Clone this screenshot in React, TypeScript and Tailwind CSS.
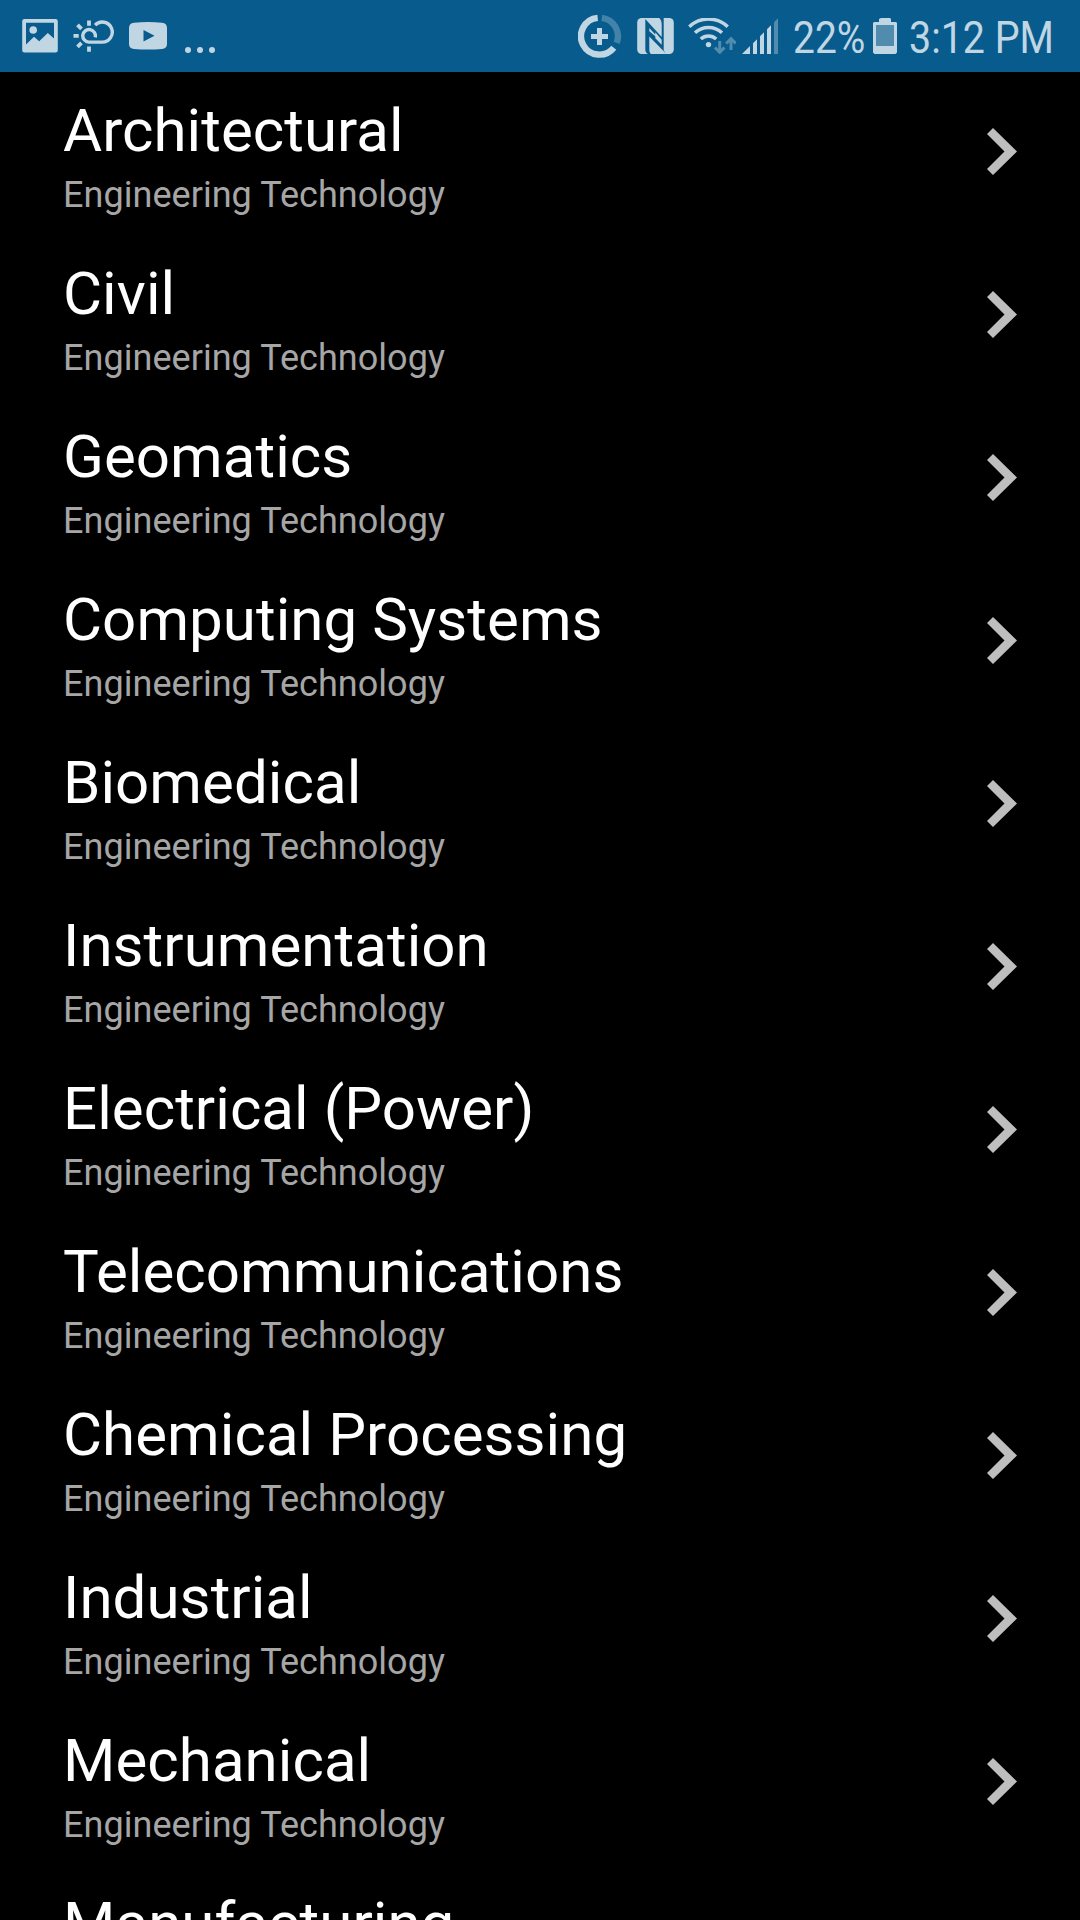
import React from "react";

const programs = [
  "Architectural",
  "Civil",
  "Geomatics",
  "Computing Systems",
  "Biomedical",
  "Instrumentation",
  "Electrical (Power)",
  "Telecommunications",
  "Chemical Processing",
  "Industrial",
  "Mechanical",
  "Manufacturing",
];

const BAR = "#085b8d";

function PictureIcon() {
  return (
    <svg className="h-[34px] w-9 shrink-0" viewBox="22 19 36 34" fill="currentColor">
      <path fillRule="evenodd" d="M24.5 19h31a2.3 2.3 0 0 1 2.3 2.3v29a2.3 2.3 0 0 1-2.3 2.3h-31a2.3 2.3 0 0 1-2.3-2.3v-29a2.3 2.3 0 0 1 2.3-2.3zM26 22.7v21.8l8-7.7 5.2 4.5 8.6-8.4 6.2 5.7V22.7z" />
      <circle cx="33.2" cy="30" r="3.8" />
    </svg>
  );
}

function WeatherIcon() {
  return (
    <svg className="h-8 w-[43px] shrink-0" viewBox="73 20.5 43 32" fill="none" stroke="currentColor" strokeWidth="3.4">
      <path d="M95.2 37.8a6.3 6.3 0 1 0-6.3 4.8h13.4a10 10 0 1 0-7.2-17" />
      <path d="M89 21v5.2M89 47v5.2M73.5 36.3h5.2M77.5 25.3l4 4M77.5 47.3l4-4" strokeWidth="3.8" />
    </svg>
  );
}

function VideoIcon() {
  return (
    <svg className="h-7 w-[38px] shrink-0" viewBox="129 22 38 28" fill="currentColor">
      <path fillRule="evenodd" d="M134 22.7q14-1.2 28 0q5 .4 5 5.3v16q0 4.7-5 5q-14 1-28 0q-5-.3-5-5V28q0-4.9 5-5.3zM143.500 30v11.500l11-5.800z" />
    </svg>
  );
}

function DataIcon() {
  return (
    <svg className="h-11 w-11 shrink-0" viewBox="578 14 44 44" fill="none" stroke="currentColor" strokeWidth="6.4">
      <path d="M597.7 17.9a18.4 18.4 0 1 0 16.1 29.800" />
      <path d="M601.8 17.9a18.4 18.4 0 0 1 14.900 24.900" opacity=".33" />
      <path d="M599.500 28v17M591 36.500h17" strokeWidth="5" />
    </svg>
  );
}

function NfcIcon() {
  return (
    <svg className="h-9 w-[37px] shrink-0" viewBox="637 18 37 36">
      <rect x="637.2" y="18" width="36.6" height="36" rx="4.5" fill="currentColor" />
      <path
        d="M645.300 19L661.700 37V25q0-5-2.500-7h4.500v32.500l2.300 3L649.300 36.500V49q0 4 1.700 5h-3q-2.700-1-2.700-5z"
        fill={BAR}
      />
      <path d="M648.300 26.500l4 4.800v3.200l11.700 11.700" fill="none" stroke="currentColor" strokeWidth="0" />
      <path d="M649.300 28l6 6.500v-2.200l6.400 7.500v5l-6.400-6.500v-2l-6-5z" fill="currentColor" />
    </svg>
  );
}

function WifiIcon() {
  return (
    <svg className="h-9 w-12 shrink-0" viewBox="688 18 48 36" fill="none" stroke="currentColor">
      <path d="M689.300 26.700a28 28 0 0 1 38.400 0M695 32.800a20 20 0 0 1 27 0M700.800 39a11.500 11.500 0 0 1 15.400 0" strokeWidth="3.500" />
      <circle cx="708.500" cy="44.600" r="2.700" fill="currentColor" stroke="none" />
      <path d="M719.700 41v11M714.900 47.500l4.800 4.800 4.800-4.800M731 50V39M726.200 43.500l4.800-4.800 4.800 4.800" strokeWidth="3" opacity=".4" />
    </svg>
  );
}

function SignalIcon() {
  return (
    <svg className="h-9 w-9 shrink-0" viewBox="742 18 36 36" fill="currentColor">
      <path d="M742 54l8-8v8zM753 54V43.200l4-4V54zM760 54V36.200l4-4V54zM767 54V29.200l4-4V54z" />
      <path d="M774 54V22.200l4-4V54z" opacity=".4" />
    </svg>
  );
}

function BatteryIcon() {
  return (
    <svg className="h-9 w-6 shrink-0" viewBox="873 18 24 36" fill="currentColor">
      <path fillRule="evenodd" d="M881 18h9l1 1v3h5l1 1v29.500l-1.500 1.500h-21l-1.500-1.500V23l1-1h5v-3zM876 25v21h18V25z" />
      <path d="M876 25h18v21h-18z" opacity=".4" />
    </svg>
  );
}

function StatusBar() {
  return (
    <header className="flex h-[72px] shrink-0 justify-between bg-[#085b8d] text-[#c0d6e3]">
      <div className="flex items-start pl-[22px]">
        <div className="pt-[19px]"><PictureIcon /></div>
        <div className="pt-[20px] pl-[15px]"><WeatherIcon /></div>
        <div className="pt-[22px] pl-[13px]"><VideoIcon /></div>
        <div className="flex gap-1.5 pt-[47px] pl-[18px]">
          <i className="size-1.5 rounded-full bg-current" />
          <i className="size-1.5 rounded-full bg-current" />
          <i className="size-1.5 rounded-full bg-current" />
        </div>
      </div>
      <div className="flex w-[502px] items-center">
        <DataIcon />
        <div className="ml-[15px]"><NfcIcon /></div>
        <div className="ml-[14px]"><WifiIcon /></div>
        <div className="ml-[6px]"><SignalIcon /></div>
        <div className="ml-[15px] w-[80px] pt-[3px]">
          <span className="block w-max origin-left scale-x-[0.865] text-[45px] leading-[53px] whitespace-nowrap">22%</span>
        </div>
        <BatteryIcon />
        <span className="ml-[12px] block w-max origin-left scale-x-[0.875] pt-[3px] text-[45px] leading-[53px] whitespace-nowrap">3:12 PM</span>
      </div>
    </header>
  );
}

function ProgramRow({ title }: { title: string }) {
  return (
    <li className="flex h-[163px] shrink-0 items-start justify-between pr-[63px] pl-[63px]">
      <div className="pt-[23px]">
        <h2 className="text-[60px] leading-[71px] tracking-[0.06px] whitespace-nowrap text-white">{title}</h2>
        <p className="mt-[8px] text-[36px] leading-[42px] tracking-[0.04px] whitespace-nowrap text-[#a6a6a6]">Engineering Technology</p>
      </div>
      <svg className="mt-14 h-[47px] w-[30px] shrink-0" viewBox="0 0 30 47" fill="#bebebe">
        <path d="M0 6l6-6 24 23.500L6 47l-6-6 17.500-17.500z" />
      </svg>
    </li>
  );
}

export default function App() {
  return (
    <div className="flex h-[1920px] w-[1080px] flex-col overflow-hidden bg-black font-['Roboto',sans-serif]">
      <StatusBar />
      <ul className="flex flex-col">
        {programs.map((p) => (
          <ProgramRow key={p} title={p} />
        ))}
      </ul>
    </div>
  );
}
